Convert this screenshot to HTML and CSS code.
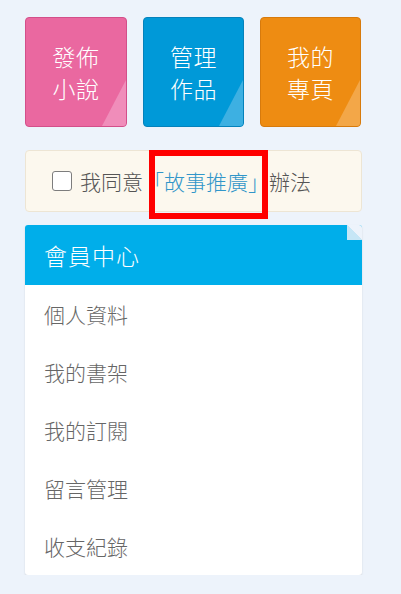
FILE: index.html
```html
<!DOCTYPE html>
<html lang="zh-Hant">
<head>
<meta charset="utf-8">
<title>會員中心</title>
<link rel="stylesheet" href="styles.css">
</head>
<body>
<div class="wrap">
  <div class="tiles">
    <a class="tile tile-pink" href="#">發佈<br>小說</a>
    <a class="tile tile-blue" href="#">管理<br>作品</a>
    <a class="tile tile-orange" href="#">我的<br>專頁</a>
  </div>

  <div class="agree">
    <label class="agree-label"><span class="box"></span>我同意<a class="agree-link" href="#">「故事推廣」</a>辦法</label>
    <span class="mark"></span>
  </div>

  <div class="panel">
    <div class="panel-head">會員中心</div>
    <ul class="menu">
      <li class="menu-item">個人資料</li>
      <li class="menu-item">我的書架</li>
      <li class="menu-item">我的訂閱</li>
      <li class="menu-item">留言管理</li>
      <li class="menu-item">收支紀錄</li>
    </ul>
  </div>
</div>
</body>
</html>
```

FILE: styles.css
```css
html, body {
  margin: 0;
  padding: 0;
}
body {
  background: #edf3fb;
  font-family: "Noto Sans CJK TC", "Noto Sans", sans-serif;
  font-weight: 300;
}
.wrap {
  width: 337px;
  padding: 17px 0 0 25px;
}
.tiles {
  display: grid;
  grid-template-columns: 102px 101px 101px;
  column-gap: 16px;
}
.tile {
  position: relative;
  overflow: hidden;
  height: 110px;
  box-sizing: border-box;
  border-radius: 4px;
  display: flex;
  align-items: center;
  justify-content: center;
  text-align: center;
  color: #fff;
  text-decoration: none;
  font-size: 23px;
  line-height: 32px;
  letter-spacing: 0.5px;
}
.tile::after {
  content: "";
  position: absolute;
  right: 0;
  bottom: 0;
  width: 24px;
  height: 46px;
  clip-path: polygon(100% 0, 100% 100%, 0 100%);
}
.tile-pink { background: #ea68a0; border: 1px solid #d34f8a; }
.tile-pink::after { background: #f08dba; }
.tile-blue { background: #0099d8; border: 1px solid #0582bb; }
.tile-blue::after { background: #3db0e2; }
.tile-orange { background: #ee8c12; border: 1px solid #d77a0c; }
.tile-orange::after { background: #f3a748; }

.agree {
  position: relative;
  margin-top: 23px;
  height: 62px;
  box-sizing: border-box;
  background: #fcf8ee;
  border: 1px solid #ede5d4;
  border-radius: 4px;
  display: flex;
  align-items: center;
  padding-left: 26px;
}
.agree-label {
  display: flex;
  align-items: center;
  font-size: 21px;
  color: #555;
}
.box {
  width: 20px;
  height: 20px;
  box-sizing: border-box;
  border: 1px solid #7d7d7d;
  border-radius: 3px;
  background: #fff;
  margin-right: 8px;
}
.agree-link {
  color: #3196c9;
  text-decoration: none;
}
.mark {
  position: absolute;
  left: 123px;
  top: -1px;
  width: 119px;
  height: 69px;
  box-sizing: border-box;
  border: 6px solid #f00;
}

.panel {
  margin-top: 13px;
  background: #fff;
  border-radius: 3px;
  box-shadow: 0 1px 2px rgba(0, 0, 0, 0.12);
  overflow: hidden;
}
.panel-head {
  position: relative;
  height: 60px;
  background: #00aeea;
  color: #fff;
  font-size: 23px;
  display: flex;
  align-items: center;
  padding-left: 19px;
  letter-spacing: 1px;
}
.panel-head::after {
  content: "";
  position: absolute;
  right: 0;
  top: 0;
  width: 15px;
  height: 15px;
  background: linear-gradient(to top right, #c6e6f6 50%, #edf3fb 50%);
}
.menu {
  list-style: none;
  margin: 0;
  padding: 0;
}
.menu-item {
  height: 58px;
  display: flex;
  align-items: center;
  padding-left: 19px;
  font-size: 21px;
  color: #666;
}
```
